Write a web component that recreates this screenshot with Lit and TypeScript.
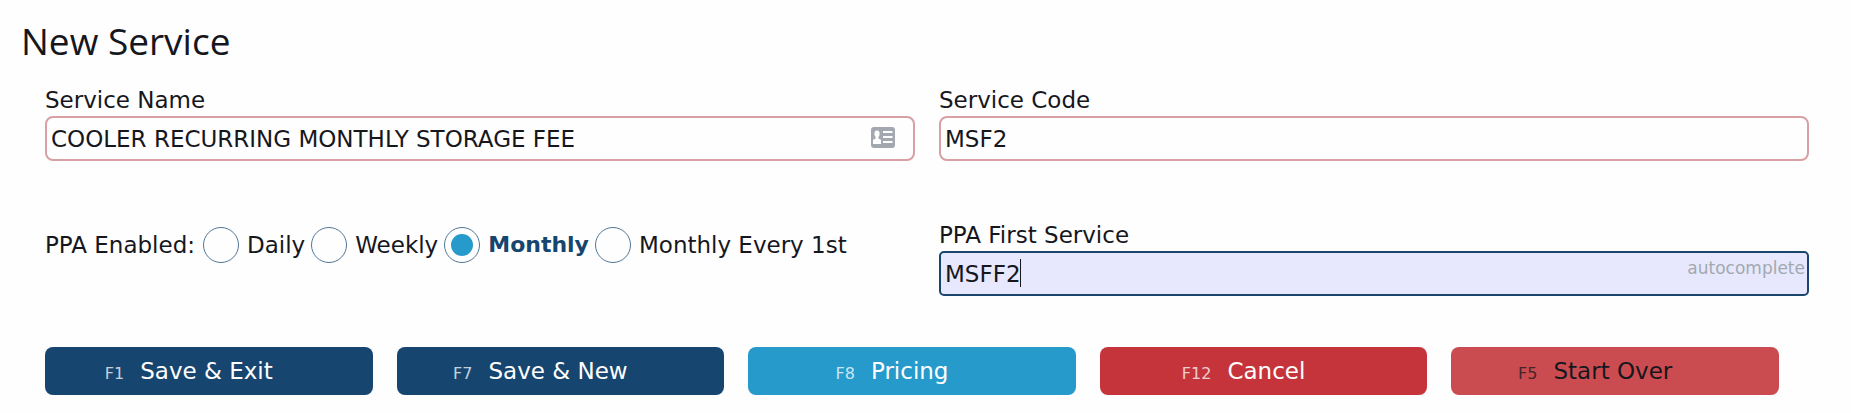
import { LitElement, html, css } from "lit";
import { customElement, state } from "lit/decorators.js";
import { classMap } from "lit/directives/class-map.js";

interface Action {
  key: string;
  label: string;
  tone: string;
}

const PERIODS = ["Daily", "Weekly", "Monthly", "Monthly Every 1st"];

const ACTIONS: Action[] = [
  { key: "F1", label: "Save & Exit", tone: "primary" },
  { key: "F7", label: "Save & New", tone: "primary" },
  { key: "F8", label: "Pricing", tone: "info" },
  { key: "F12", label: "Cancel", tone: "danger" },
  { key: "F5", label: "Start Over", tone: "reset" },
];

@customElement("app-root")
export class AppRoot extends LitElement {
  @state() private period = "Monthly";

  static styles = css`
    :host {
      display: block;
      box-sizing: border-box;
      padding: 16px 42px 18px 45px;
      background: #fefefe;
      color: #16171d;
      font: 23px/32px Verdana, "DejaVu Sans", sans-serif;
    }
    *,
    *::before {
      box-sizing: border-box;
    }
    .title {
      margin: 0 0 18px -24px;
      font: 400 37px/50px "Segoe UI", "Open Sans", sans-serif;
    }
    .fields {
      display: grid;
      grid-template-columns: 1fr 1fr;
      gap: 58px 24px;
    }
    .field {
      display: flex;
      flex-direction: column;
      min-width: 0;
    }
    .control {
      position: relative;
      display: flex;
    }
    .input {
      width: 100%;
      height: 45px;
      margin: 0;
      padding: 0 4px;
      border: 2px solid #d9a0a4;
      border-radius: 8px;
      outline: none;
      background: #fefefe;
      color: inherit;
      font: inherit;
    }
    .input.active {
      border-color: #1a456d;
      border-radius: 5px;
      background: #e7e8fd;
    }
    .contact {
      position: absolute;
      top: 11px;
      right: 20px;
      width: 24px;
      height: 21px;
    }
    .hint {
      position: absolute;
      top: 5px;
      right: 4px;
      color: #a3a8b0;
      font-size: 17px;
      line-height: 24px;
    }
    .caret {
      position: absolute;
      top: 8px;
      left: 81px;
      width: 1px;
      height: 28px;
      background: #16171d;
    }
    .periods {
      display: flex;
      align-items: center;
      align-self: start;
      margin: 8px 0 0;
      padding: 0;
      border: 0;
      white-space: nowrap;
    }
    .caption {
      margin-right: 8px;
    }
    .option {
      display: flex;
      align-items: center;
      gap: 8px;
      margin-right: 6px;
    }
    .option.checked {
      color: #16456f;
      font-weight: 700;
      font-size: 22px;
    }
    .radio {
      appearance: none;
      display: grid;
      place-items: center;
      width: 36px;
      height: 36px;
      margin: 0;
      border: 1px solid #527696;
      border-radius: 50%;
      background: #fefefe;
    }
    .radio:checked::before {
      content: "";
      width: 22px;
      height: 22px;
      border-radius: 50%;
      background: #259acb;
    }
    .actions {
      display: grid;
      grid-template-columns: repeat(5, 1fr);
      gap: 24px;
      margin: 51px 30px 0 0;
    }
    .button {
      display: flex;
      align-items: baseline;
      justify-content: center;
      gap: 16px;
      height: 48px;
      padding: 8px 40px 8px 0;
      border: 0;
      border-radius: 8px;
      color: #fefefe;
      font: inherit;
      white-space: nowrap;
    }
    .key {
      font: inherit;
      font-size: 16px;
      opacity: 0.75;
    }
    .primary {
      background: #16456f;
    }
    .info {
      background: #259acb;
    }
    .danger {
      background: #c5343a;
    }
    .reset {
      background: #cb4c50;
      color: #16171d;
    }
  `;

  render() {
    return html`
      <h1 class="title">New Service</h1>
      <form @submit=${(e: Event) => e.preventDefault()}>
        <div class="fields">
          <div class="field">
            <label for="name">Service Name</label>
            <div class="control">
              <input class="input" id="name" type="text" value="COOLER RECURRING MONTHLY STORAGE FEE" />
              <svg class="contact" viewBox="0 0 24 21" aria-hidden="true">
                <rect width="24" height="21" rx="3" fill="#a3a7b0" />
                <ellipse cx="6" cy="6.800" rx="2.600" ry="3.200" fill="#fefefe" />
                <path d="M4.600 9h2.800v2.500l2.600 1.300v4.200H2v-4.200l2.600-1.300z" fill="#fefefe" />
                <path d="M12 5h9.500M12 10h9.500M12 15h9.500" stroke="#fefefe" stroke-width="2" />
              </svg>
            </div>
          </div>
          <div class="field">
            <label for="code">Service Code</label>
            <div class="control">
              <input class="input" id="code" type="text" value="MSF2" />
            </div>
          </div>
          <div class="periods" role="radiogroup" aria-labelledby="ppa">
            <span class="caption" id="ppa">PPA Enabled:</span>
            ${PERIODS.map(
              (p) => html`
                <label class=${classMap({ option: true, checked: p === this.period })}>
                  <input
                    class="radio"
                    type="radio"
                    name="period"
                    .checked=${p === this.period}
                    @change=${() => (this.period = p)}
                  />
                  <span>${p}</span>
                </label>
              `
            )}
          </div>
          <div class="field">
            <label for="first">PPA First Service</label>
            <div class="control">
              <input class="input active" id="first" type="text" value="MSFF2" />
              <span class="caret"></span>
              <span class="hint">autocomplete</span>
            </div>
          </div>
        </div>
        <div class="actions">
          ${ACTIONS.map(
            (a) => html`
              <button class="button ${a.tone}" type="button">
                <kbd class="key">${a.key}</kbd><span>${a.label}</span>
              </button>
            `
          )}
        </div>
      </form>
    `;
  }
}
